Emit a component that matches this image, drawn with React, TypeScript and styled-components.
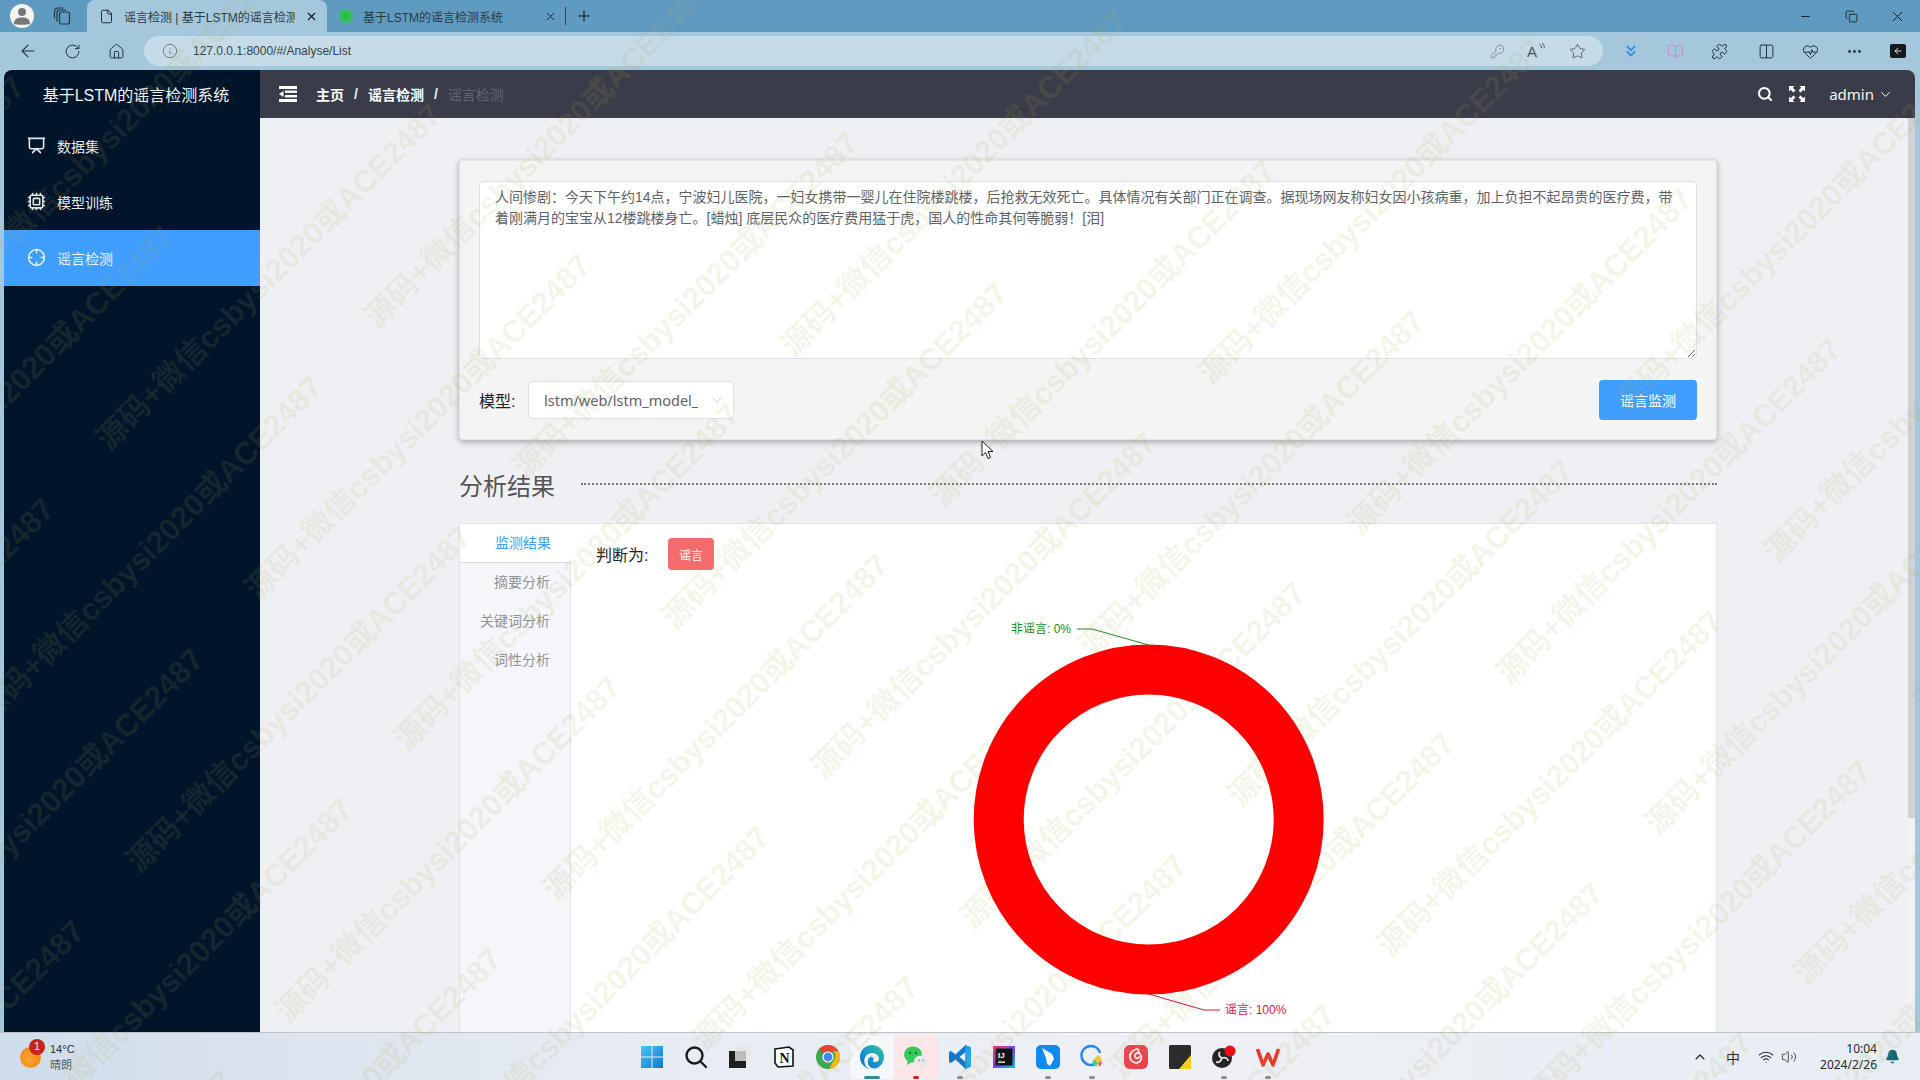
import React from "react";
import styled, { createGlobalStyle } from "styled-components";
import {
  ArrowLeft, RotateCw, Home, Info, KeyRound, Star, Puzzle, Columns2, HeartPulse, MoreHorizontal,
  Minus, Copy, X, Plus, File, Search, ChevronDown, ChevronUp, Presentation, Cpu, Crosshair, Wifi, Volume2, Bell, BookOpen, ChevronsDown,
} from "lucide-react";

const FONT = `"Liberation Sans", "Noto Sans CJK SC", sans-serif`;

const Global = createGlobalStyle`
  html, body { margin: 0; padding: 0; width: 1920px; height: 1080px; overflow: hidden; }
  * { box-sizing: border-box; }
  body { font-family: ${FONT}; }
`;

const Screen = styled.div`
  position: relative;
  width: 1920px;
  height: 1080px;
  overflow: hidden;
  display: flex;
  flex-direction: column;
  background: #a5c7dc;
`;

/* ---------- browser chrome ---------- */
const TabStrip = styled.div`
  height: 32px;
  flex: none;
  display: flex;
  align-items: center;
  background: #5f9bc0;
  color: #10181e;
`;
const IconCell = styled.div<{ $w?: number }>`
  width: ${(p) => p.$w ?? 44}px;
  flex: none;
  display: flex;
  align-items: center;
  justify-content: center;
`;
const Avatar = styled.div`
  width: 24px;
  height: 24px;
  border-radius: 50%;
  background: #f4f4f4;
  display: flex;
  align-items: center;
  justify-content: center;
`;
const Tab = styled.div<{ $active?: boolean; $w: number }>`
  width: ${(p) => p.$w}px;
  height: 32px;
  flex: none;
  display: flex;
  align-items: center;
  gap: 10px;
  padding: 0 8px 0 12px;
  border-radius: 8px 8px 0 0;
  background: ${(p) => (p.$active ? "#a5c7dc" : "transparent")};
  margin-left: ${(p) => (p.$active ? 7 : 0)}px;
`;
const TabTitle = styled.div`
  width: 171px;
  flex: none;
  font-size: 12px;
  color: #2a3a46;
  white-space: nowrap;
  overflow: hidden;
`;
const TabDot = styled.div`
  width: 14px;
  height: 14px;
  flex: none;
  border-radius: 50%;
  background: #2fb84f;
  border: 3px solid #35c25a;
`;
const TabDivider = styled.div`
  width: 1px;
  height: 18px;
  background: #2d4a5c;
`;
const WindowControls = styled.div`
  margin-left: auto;
  display: flex;
`;
const Toolbar = styled.div`
  height: 38px;
  flex: none;
  display: flex;
  align-items: center;
  padding-left: 6px;
  color: #22323d;
`;
const Address = styled.div`
  width: 1459px;
  height: 30px;
  margin: 0 6px;
  flex: none;
  border-radius: 15px;
  background: #c5dbe8;
  display: flex;
  align-items: center;
  padding: 0 6px 0 18px;
`;
const Url = styled.div`
  margin-left: 15px;
  font-size: 12px;
  color: #33424c;
  flex: 1;
`;
const ToolDivider = styled.div`
  width: 1px;
  height: 20px;
  margin: 0 2px 0 1px;
  background: #7d98a8;
`;
const SidePanelBtn = styled.div`
  width: 16px;
  height: 14px;
  background: #15191c;
  border-radius: 2px;
  display: flex;
  align-items: center;
  justify-content: center;
`;

/* ---------- app window ---------- */
const AppWindow = styled.div`
  flex: 1;
  min-height: 0;
  margin: 0 5px 0 4px;
  display: flex;
  overflow: hidden;
  border-radius: 8px 8px 0 0;
`;
const Sidebar = styled.aside`
  width: 256px;
  flex: none;
  background: #00142a;
  color: #fff;
`;
const Brand = styled.div`
  height: 48px;
  padding-left: 8px;
  display: flex;
  align-items: center;
  justify-content: center;
  font-size: 16px;
  color: #f2f4f6;
`;
const MenuItem = styled.div<{ $active?: boolean }>`
  height: 56px;
  display: flex;
  align-items: center;
  gap: 11px;
  padding-left: 23px;
  padding-bottom: 1px;
  font-size: 14px;
  color: ${(p) => (p.$active ? "#eaf4ff" : "#e6e9ec")};
  background: ${(p) => (p.$active ? "#409eff" : "transparent")};
`;
const Main = styled.div`
  flex: 1;
  min-width: 0;
  display: flex;
  flex-direction: column;
`;
const TopBar = styled.header`
  height: 48px;
  flex: none;
  background: #3a3d49;
  display: flex;
  align-items: center;
  padding-left: 19px;
  color: #fff;
`;
const Crumbs = styled.nav`
  display: flex;
  align-items: center;
  margin-left: 19px;
  gap: 10px;
  font-size: 14px;
`;
const Crumb = styled.span<{ $muted?: boolean }>`
  font-weight: ${(p) => (p.$muted ? 400 : 700)};
  color: ${(p) => (p.$muted ? "#60646f" : "#fff")};
`;
const CrumbSep = styled.span`
  font-weight: 700;
  color: #f0f0f0;
`;
const TopActions = styled.div`
  margin-left: auto;
  display: flex;
  align-items: center;
  padding-right: 19px;
`;
const UserName = styled.span`
  margin-left: 8px;
  font-size: 15px;
  font-family: "Noto Sans", sans-serif;
  color: #f4f4f4;
`;
const ContentRow = styled.div`
  flex: 1;
  min-height: 0;
  display: flex;
  background: #eff0f4;
`;
const Content = styled.main`
  flex: 1;
  min-width: 0;
  overflow: hidden;
  padding: 42px 191px 0 199px;
`;
const ScrollTrack = styled.div`
  width: 7px;
  flex: none;
  background: #f0f1f4;
`;
const ScrollThumb = styled.div`
  height: 700px;
  background: #cfd1d6;
`;
const InputCard = styled.section`
  height: 280px;
  padding: 20px 19px;
  background: #f4f4f5;
  border: 1px solid #e6e6e8;
  border-radius: 4px;
  box-shadow: 0 2px 6px rgba(0, 0, 0, 0.32);
`;
const NewsInput = styled.textarea`
  display: block;
  width: 100%;
  height: 178px;
  padding: 5px 15px;
  border: 1px solid #dcdfe6;
  border-radius: 4px;
  background: #fff;
  font-family: ${FONT};
  font-size: 14px;
  line-height: 21px;
  color: #606266;
  outline: none;
`;
const FormRow = styled.div`
  margin-top: 21px;
  height: 40px;
  display: flex;
  align-items: center;
`;
const FieldLabel = styled.label`
  font-size: 16px;
  color: #222;
  width: 49px;
  flex: none;
`;
const SelectBox = styled.div`
  width: 206px;
  height: 38px;
  background: #fff;
  border: 1px solid #dcdfe6;
  border-radius: 4px;
  display: flex;
  align-items: center;
  justify-content: space-between;
  padding: 0 8px 0 15px;
  color: #c0c4cc;
`;
const SelectValue = styled.div`
  width: 154px;
  flex: none;
  overflow: hidden;
  white-space: nowrap;
  font-size: 14.5px;
  font-family: "Noto Sans", sans-serif;
  color: #606266;
`;
const DetectButton = styled.button`
  margin-left: auto;
  width: 98px;
  height: 40px;
  border: none;
  border-radius: 4px;
  background: #409eff;
  color: #fff;
  font-family: ${FONT};
  font-size: 14px;
`;
const SectionHead = styled.div`
  height: 83px;
  padding-top: 5px;
  display: flex;
  align-items: center;
  gap: 26px;
  color: #555;
`;
const SectionTitle = styled.h2`
  margin: 0;
  font-size: 24px;
  font-weight: 400;
  flex: none;
`;
const DotLine = styled.div`
  flex: 1;
  border-top: 2px dotted #777;
`;
const ResultPanel = styled.section`
  min-height: 640px;
  display: flex;
  background: #fff;
  border: 1px solid #dfe2e8;
`;
const TabColumn = styled.div`
  width: 111px;
  flex: none;
  background: #f4f6fa;
  border-right: 1px solid #dfe4ed;
`;
const SideTab = styled.div<{ $active?: boolean }>`
  height: 39px;
  line-height: 39px;
  text-align: right;
  padding-right: 20px;
  font-size: 14px;
  color: ${(p) => (p.$active ? "#409eff" : "#909399")};
  background: ${(p) => (p.$active ? "#fff" : "transparent")};
  border-bottom: ${(p) => (p.$active ? "1px solid #d5dae4" : "0")};
  margin-right: ${(p) => (p.$active ? "-1px" : "0")};
  position: relative;
`;
const ResultBody = styled.div`
  flex: 1;
  min-width: 0;
  padding: 14px 0 0 25px;
`;
const Verdict = styled.div`
  display: flex;
  align-items: center;
  gap: 19px;
  font-size: 16px;
  color: #222;
`;
const VerdictLabel = styled.span`
  width: 53px;
  flex: none;
`;
const RumorTag = styled.span`
  width: 46px;
  height: 32px;
  border-radius: 4px;
  background: #f56c6c;
  color: #fff;
  font-size: 12px;
  display: flex;
  align-items: center;
  justify-content: center;
`;
const DonutChart = styled.svg`
  display: block;
  margin: 30px 0 0 -25px;
  position: relative;
  z-index: 6;
`;

/* ---------- taskbar ---------- */
const Taskbar = styled.footer`
  height: 48px;
  flex: none;
  display: flex;
  align-items: center;
  border-top: 1px solid #bfc3c8;
  background: linear-gradient(90deg, #cfdcea 0%, #e6ebf3 30%, #eef0f5 60%, #e8edf4 100%);
`;
const Weather = styled.div`
  width: 630px;
  flex: none;
  padding-left: 20px;
  display: flex;
  align-items: center;
  gap: 9px;
`;
const Sun = styled.div`
  position: relative;
  width: 21px;
  height: 21px;
  margin-top: 2px;
  border-radius: 50%;
  background: radial-gradient(circle at 40% 60%, #f9a52b, #ee7c12);
`;
const Badge = styled.span`
  position: absolute;
  left: 9px;
  top: -8px;
  width: 16px;
  height: 16px;
  border-radius: 50%;
  background: #c4261c;
  color: #fff;
  font-size: 10px;
  line-height: 16px;
  text-align: center;
`;
const WeatherText = styled.div`
  font-size: 11px;
  line-height: 16px;
  color: #2a3038;
`;
const WeatherSub = styled.div`
  color: #555c66;
`;
const Dock = styled.div`
  display: flex;
`;
const DockCell = styled.div<{ $bg?: string }>`
  position: relative;
  width: 44px;
  height: 44px;
  display: flex;
  align-items: center;
  justify-content: center;
  border-radius: 4px;
  background: ${(p) => p.$bg ?? "transparent"};
`;
const RunDot = styled.span<{ $color?: string; $wide?: boolean }>`
  position: absolute;
  bottom: 0;
  left: 50%;
  transform: translateX(-50%);
  width: ${(p) => (p.$wide ? 16 : 6)}px;
  height: 3px;
  border-radius: 2px;
  background: ${(p) => p.$color ?? "#8a8d92"};
`;
const Tray = styled.div`
  margin-left: auto;
  display: flex;
  align-items: center;
  color: #1e2328;
  padding-right: 20px;
`;
const ImeGlyph = styled.span`
  width: 32px;
  text-align: center;
  font-size: 14px;
  margin: 0 6px 0 7px;
`;
const Clock = styled.div`
  width: 76px;
  margin-right: 7px;
  text-align: right;
  font-size: 12px;
  line-height: 16px;
  color: #23282e;
  font-family: "Noto Sans", sans-serif;
`;

/* ---------- overlay ---------- */
const WatermarkLayer = styled.div`
  position: absolute;
  inset: 0;
  overflow: hidden;
  pointer-events: none;
  z-index: 5;
`;
const Stamp = styled.div`
  position: absolute;
  white-space: nowrap;
  font: 700 31px/1 ${FONT};
  color: rgba(170, 170, 78, 0.13);
  transform-origin: right center;
  transform: translate(-100%, -50%) rotate(-45deg);
`;
const Cursor = styled.svg`
  position: absolute;
  left: 981px;
  top: 440px;
  z-index: 7;
`;

const stamps: { x: number; y: number }[] = [];
for (let i = -12; i <= 12; i++) {
  for (let j = -8; j <= 8; j++) {
    const x = 198 + i * 149 + j * 417;
    const y = 654 + i * 150 + j * 28;
    if (x > -50 && x < 2500 && y > -50 && y < 1500) stamps.push({ x, y });
  }
}

const TEXT =
  "人间惨剧：今天下午约14点，宁波妇儿医院，一妇女携带一婴儿在住院楼跳楼，后抢救无效死亡。具体情况有关部门正在调查。据现场网友称妇女因小孩病重，加上负担不起昂贵的医疗费，带着刚满月的宝宝从12楼跳楼身亡。[蜡烛] 底层民众的医疗费用猛于虎，国人的性命其何等脆弱！[泪]";

const FoldIcon = () => (
  <svg width="18" height="16" viewBox="0 0 18 16" fill="#fff">
    <rect x="0" y="0" width="18" height="3" />
    <rect x="6" y="4.500" width="12" height="2.400" />
    <rect x="6" y="9" width="12" height="2.400" />
    <rect x="0" y="13" width="18" height="3" />
    <path d="M0 8l4.500-3v6z" />
  </svg>
);
const FullIcon = () => (
  <svg width="16" height="16" viewBox="0 0 16 16" fill="#fff">
    <path d="M0 0h5.500L3.800 1.700 6.500 4.400 4.400 6.500 1.700 3.800 0 5.500zM16 0v5.500l-1.700-1.700-2.700 2.700-2.100-2.100 2.700-2.700L10.500 0zM0 16v-5.500l1.700 1.700 2.700-2.700 2.100 2.100-2.700 2.700L5.500 16zM16 16h-5.500l1.700-1.700-2.700-2.700 2.100-2.100 2.700 2.700 1.700-1.700z" />
  </svg>
);
const PersonIcon = () => (
  <svg width="16" height="18" viewBox="0 0 16 18" fill="#777">
    <circle cx="8" cy="5" r="4" />
    <path d="M0 17c0-5 3-6.500 8-6.500s8 1.500 8 6.500c-2 1-14 1-16 0z" />
  </svg>
);
const CollectionsIcon = () => (
  <svg width="18" height="18" viewBox="0 0 18 18" fill="none" stroke="#26343e" strokeWidth="1.200">
    <rect x="6.500" y="5" width="10" height="12" rx="2" />
    <path d="M4 14.500V6c0-2 1-3 3-3h6M1.500 11.500V5c0-2.500 1.500-4 4-4h5" />
  </svg>
);
const ReadAloudIcon = () => (
  <svg width="20" height="18" viewBox="0 0 20 18" fill="none">
    <text x="0" y="15" fontFamily="Liberation Sans, sans-serif" fontSize="15" fill="#44525c">A</text>
    <path d="M12.500 2c1.500 1 2 2.500 1.800 4M15 1c1.800 1.300 2.500 3 2.200 5" stroke="#44525c" strokeWidth="1" />
  </svg>
);

const Win = () => (
  <svg width="24" height="24" viewBox="0 0 24 24">
    <defs>
      <linearGradient id="wg" x1="0" y1="0" x2="1" y2="1">
        <stop offset="0" stopColor="#4cc2f1" />
        <stop offset="1" stopColor="#0a78d4" />
      </linearGradient>
    </defs>
    <path fill="url(#wg)" d="M1 1h10.500v10.500H1zM12.500 1H23v10.500H12.500zM1 12.500h10.500V23H1zM12.500 12.500H23V23H12.500z" />
  </svg>
);
const SearchDock = () => (
  <svg width="24" height="24" viewBox="0 0 24 24" fill="none" stroke="#1b1b1b" strokeWidth="2.400" strokeLinecap="round">
    <circle cx="10.500" cy="10.500" r="8" />
    <path d="M16.500 16.500L22 22" />
  </svg>
);
const Stack = () => (
  <svg width="24" height="24" viewBox="0 0 24 24">
    <rect x="1" y="6" width="17" height="17" fill="#1f1f1f" />
    <rect x="8" y="1" width="15" height="15" rx="1" fill="#e8e8e8" />
    <rect x="7" y="6" width="11" height="10" fill="#bdbdbd" />
  </svg>
);
const Notion = () => (
  <svg width="22" height="22" viewBox="0 0 22 22">
    <path d="M2 3l14-2 4 3v16l-15 1-3-4z" fill="#fff" stroke="#111" strokeWidth="1.600" />
    <text x="11.500" y="17" textAnchor="middle" fontFamily="Liberation Serif, serif" fontWeight="700" fontSize="14" fill="#111">N</text>
  </svg>
);
const Chrome = () => (
  <svg width="24" height="24" viewBox="0 0 24 24">
    <circle cx="12" cy="12" r="12" fill="#34a853" />
    <path d="M12 0a12 12 0 0 1 10.400 6H12a6 6 0 0 0-5.200 3L3.200 4A12 12 0 0 1 12 0z" fill="#ea4335" />
    <path d="M22.400 6A12 12 0 0 1 13 24l5-9a6 6 0 0 0-1-9z" fill="#fbbc05" />
    <circle cx="12" cy="12" r="5.600" fill="#fff" />
    <circle cx="12" cy="12" r="4.400" fill="#4285f4" />
  </svg>
);
const Edge = () => (
  <svg width="26" height="26" viewBox="0 0 26 26">
    <defs>
      <linearGradient id="eg" x1="1" y1="0" x2="0" y2="1">
        <stop offset="0" stopColor="#35c98f" />
        <stop offset=".6" stopColor="#1590d8" />
        <stop offset="1" stopColor="#0c63b8" />
      </linearGradient>
    </defs>
    <circle cx="13" cy="13" r="12" fill="url(#eg)" />
    <path d="M9 24c-5-3-5-11 0-14 5-2.500 11 0 11 5 0 2-2 3-4 3-1 0-2-.5-2-1 2-3-1-5-3-4-3 2-3 7 0 10 2 1.500 5 2 8 1-3 2-7 2-10 0z" fill="#eef2f6" />
  </svg>
);
const WeChat = () => (
  <svg width="24" height="22" viewBox="0 0 24 22">
    <ellipse cx="9" cy="8.500" rx="9" ry="8" fill="#38c95c" />
    <path d="M4 14l-1 5 5-3z" fill="#38c95c" />
    <ellipse cx="17" cy="15" rx="7" ry="5.500" fill="#e8e8e8" />
    <circle cx="6" cy="7" r="1.200" fill="#1c7a36" />
    <circle cx="12" cy="7" r="1.200" fill="#1c7a36" />
    <circle cx="15" cy="14.500" r="0.900" fill="#999" />
    <circle cx="19" cy="14.500" r="0.900" fill="#999" />
  </svg>
);
const VSCode = () => (
  <svg width="24" height="24" viewBox="0 0 24 24">
    <path d="M17.500 0L23 2.500v19L17.500 24 7.500 14.500 3 18l-2-1V7l2-1 4.500 3.500zM17.500 7L11.500 12l6 5z" fill="#1479c8" />
    <path d="M17.500 0L23 2.500v19L17.500 24z" fill="#2aa2ea" />
  </svg>
);
const Idea = () => (
  <svg width="22" height="22" viewBox="0 0 22 22">
    <defs>
      <linearGradient id="ig" x1="0" y1="0" x2="1" y2="1">
        <stop offset="0" stopColor="#fe315d" />
        <stop offset=".5" stopColor="#7b3ff2" />
        <stop offset="1" stopColor="#07c3f2" />
      </linearGradient>
    </defs>
    <rect width="22" height="22" fill="url(#ig)" />
    <rect x="2.500" y="2.500" width="17" height="17" fill="#111" />
    <text x="5" y="12" fontFamily="Liberation Sans, sans-serif" fontWeight="700" fontSize="8" fill="#fff">IJ</text>
    <rect x="5" y="15.500" width="7" height="1.300" fill="#fff" />
  </svg>
);
const Feather = () => (
  <svg width="24" height="24" viewBox="0 0 24 24">
    <rect width="24" height="24" rx="5" fill="#0f8af0" />
    <path d="M6 3l10 6 2 5-4 7-3-2-1-6z" fill="#fff" />
  </svg>
);
const Bubble = () => (
  <svg width="26" height="26" viewBox="0 0 26 26" fill="none">
    <path d="M12 2a9.500 9.500 0 1 0 3 18.500" stroke="#2a86f0" strokeWidth="2.400" />
    <path d="M12 2a9.500 9.500 0 0 1 9 7" stroke="#2a86f0" strokeWidth="2.400" />
    <path d="M19 11l4 4-4 4-4-4z" fill="#f4c430" />
    <path d="M15 15l4 4-2 4-4-4z" fill="#3ecf8e" />
    <path d="M19 19l3-3 1 4-3 3z" fill="#ef6a4c" />
  </svg>
);
const Netease = () => (
  <svg width="24" height="24" viewBox="0 0 24 24" fill="none">
    <rect width="24" height="24" rx="6" fill="#ee3f4d" />
    <path d="M13 4c-5 1-8 5-7 9s6 6 9 4 3-6 1-8-5-1-5 2 3 3 4 1M14 4l1 4" stroke="#fff" strokeWidth="1.700" strokeLinecap="round" />
  </svg>
);
const Sticky = () => (
  <svg width="22" height="24" viewBox="0 0 22 24">
    <rect width="22" height="24" rx="1.500" fill="#2b2b2b" />
    <path d="M22 10v14H10z" fill="#f6cf1e" />
  </svg>
);
const Obs = () => (
  <svg width="26" height="26" viewBox="0 0 26 26" fill="none">
    <circle cx="11" cy="14" r="10" fill="#23262b" />
    <path d="M11 14c-3-1-4-4-2-6m2 6c3-1 6 0 6 3m-6-3c-1 3-3 5-6 4" stroke="#e6e6e6" strokeWidth="1.800" />
    <circle cx="19" cy="7" r="5.500" fill="#ee0a12" />
  </svg>
);
const Wps = () => (
  <svg width="24" height="22" viewBox="0 0 24 22" fill="none">
    <path d="M1.500 3l5.500 16 5-11 5 11 5.500-16" stroke="#e8392c" strokeWidth="3.600" strokeLinejoin="round" />
  </svg>
);

export default function App() {
  return (
    <Screen>
      <Global />
      <TabStrip>
        <IconCell $w={44}>
          <Avatar>
            <PersonIcon />
          </Avatar>
        </IconCell>
        <IconCell $w={36}>
          <CollectionsIcon />
        </IconCell>
        <Tab $active $w={240}>
          <File size={15} strokeWidth={1.4} />
          <TabTitle>谣言检测 | 基于LSTM的谣言检测系统</TabTitle>
          <X size={13} strokeWidth={2} />
        </Tab>
        <Tab $w={238}>
          <TabDot />
          <TabTitle>基于LSTM的谣言检测系统</TabTitle>
          <X size={13} strokeWidth={1.6} />
        </Tab>
        <TabDivider />
        <IconCell $w={36}>
          <Plus size={18} strokeWidth={1.4} />
        </IconCell>
        <WindowControls>
          <IconCell $w={46}>
            <Minus size={13} strokeWidth={1.6} />
          </IconCell>
          <IconCell $w={46}>
            <Copy size={13} strokeWidth={1.5} />
          </IconCell>
          <IconCell $w={46}>
            <X size={17} strokeWidth={1.4} />
          </IconCell>
        </WindowControls>
      </TabStrip>
      <Toolbar>
        <IconCell>
          <ArrowLeft size={20} strokeWidth={1.3} />
        </IconCell>
        <IconCell>
          <RotateCw size={17} strokeWidth={1.4} />
        </IconCell>
        <IconCell>
          <Home size={17} strokeWidth={1.4} />
        </IconCell>
        <Address>
          <Info size={16} strokeWidth={1.2} color="#55636d" />
          <Url>127.0.0.1:8000/#/Analyse/List</Url>
          <IconCell $w={40}>
            <KeyRound size={15} strokeWidth={1.2} color="#6b7a84" />
          </IconCell>
          <IconCell $w={40}>
            <ReadAloudIcon />
          </IconCell>
          <IconCell $w={40}>
            <Star size={17} strokeWidth={1.2} color="#44525c" />
          </IconCell>
        </Address>
        <IconCell>
          <ChevronsDown size={18} strokeWidth={2.4} color="#3a8fe8" />
        </IconCell>
        <IconCell>
          <BookOpen size={17} strokeWidth={1.4} color="#c28fd6" />
        </IconCell>
        <IconCell>
          <Puzzle size={17} strokeWidth={1.4} />
        </IconCell>
        <ToolDivider />
        <IconCell>
          <Columns2 size={17} strokeWidth={1.4} />
        </IconCell>
        <IconCell>
          <HeartPulse size={17} strokeWidth={1.4} />
        </IconCell>
        <IconCell>
          <MoreHorizontal size={17} strokeWidth={2} />
        </IconCell>
        <IconCell>
          <SidePanelBtn>
            <ArrowLeft size={10} strokeWidth={2} color="#fff" />
          </SidePanelBtn>
        </IconCell>
      </Toolbar>

      <AppWindow>
        <Sidebar>
          <Brand>基于LSTM的谣言检测系统</Brand>
          <MenuItem>
            <Presentation size={19} strokeWidth={2} />
            数据集
          </MenuItem>
          <MenuItem>
            <Cpu size={19} strokeWidth={2} />
            模型训练
          </MenuItem>
          <MenuItem $active>
            <Crosshair size={19} strokeWidth={1.8} />
            谣言检测
          </MenuItem>
        </Sidebar>
        <Main>
          <TopBar>
            <FoldIcon />
            <Crumbs>
              <Crumb>主页</Crumb>
              <CrumbSep>/</CrumbSep>
              <Crumb>谣言检测</Crumb>
              <CrumbSep>/</CrumbSep>
              <Crumb $muted>谣言检测</Crumb>
            </Crumbs>
            <TopActions>
              <IconCell $w={16}>
                <Search size={18} strokeWidth={3} />
              </IconCell>
              <IconCell $w={48}>
                <FullIcon />
              </IconCell>
              <UserName>admin</UserName>
              <IconCell $w={22}>
                <ChevronDown size={15} strokeWidth={1.6} />
              </IconCell>
            </TopActions>
          </TopBar>
          <ContentRow>
            <Content>
              <InputCard>
                <NewsInput readOnly defaultValue={TEXT} />
                <FormRow>
                  <FieldLabel>模型:</FieldLabel>
                  <SelectBox>
                    <SelectValue>lstm/web/lstm_model_1</SelectValue>
                    <ChevronDown size={16} strokeWidth={1.2} />
                  </SelectBox>
                  <DetectButton>谣言监测</DetectButton>
                </FormRow>
              </InputCard>
              <SectionHead>
                <SectionTitle>分析结果</SectionTitle>
                <DotLine />
              </SectionHead>
              <ResultPanel>
                <TabColumn>
                  <SideTab $active>监测结果</SideTab>
                  <SideTab>摘要分析</SideTab>
                  <SideTab>关键词分析</SideTab>
                  <SideTab>词性分析</SideTab>
                </TabColumn>
                <ResultBody>
                  <Verdict>
                    <VerdictLabel>判断为:</VerdictLabel>
                    <RumorTag>谣言</RumorTag>
                  </Verdict>
                  <DonutChart width="1146" height="470" viewBox="0 0 1146 470">
                    <circle cx="577.700" cy="219.500" r="150" fill="none" stroke="#ff0000" strokeWidth="50" />
                    <polyline points="506,29 521,29 577.700,45" fill="none" stroke="#228b22" strokeWidth="1" />
                    <text x="440" y="33" fontSize="12" fontFamily={FONT} fill="#228b22">非谣言: 0%</text>
                    <polyline points="577.700,394 633,410 649,410" fill="none" stroke="#dc143c" strokeWidth="1" />
                    <text x="654" y="414" fontSize="12" fontFamily={FONT} fill="#dc143c">谣言: 100%</text>
                  </DonutChart>
                </ResultBody>
              </ResultPanel>
            </Content>
            <ScrollTrack>
              <ScrollThumb />
            </ScrollTrack>
          </ContentRow>
        </Main>
      </AppWindow>

      <Taskbar>
        <Weather>
          <Sun>
            <Badge>1</Badge>
          </Sun>
          <WeatherText>
            14°C
            <WeatherSub>晴朗</WeatherSub>
          </WeatherText>
        </Weather>
        <Dock>
          <DockCell><Win /></DockCell>
          <DockCell><SearchDock /></DockCell>
          <DockCell><Stack /></DockCell>
          <DockCell><Notion /></DockCell>
          <DockCell><Chrome /></DockCell>
          <DockCell $bg="#f5f7fa"><Edge /><RunDot $color="#3a8a9c" $wide /></DockCell>
          <DockCell $bg="#fbe6e8"><WeChat /><RunDot $color="#c4261c" /></DockCell>
          <DockCell><VSCode /><RunDot /></DockCell>
          <DockCell><Idea /></DockCell>
          <DockCell><Feather /><RunDot /></DockCell>
          <DockCell><Bubble /><RunDot /></DockCell>
          <DockCell><Netease /></DockCell>
          <DockCell><Sticky /></DockCell>
          <DockCell><Obs /><RunDot /></DockCell>
          <DockCell><Wps /><RunDot /></DockCell>
        </Dock>
        <Tray>
          <IconCell $w={20}>
            <ChevronUp size={16} strokeWidth={1.6} />
          </IconCell>
          <ImeGlyph>中</ImeGlyph>
          <IconCell $w={22}>
            <Wifi size={16} strokeWidth={1.6} />
          </IconCell>
          <IconCell $w={24}>
            <Volume2 size={16} strokeWidth={1.2} />
          </IconCell>
          <Clock>
            10:04
            <br />
            2024/2/26
          </Clock>
          <IconCell $w={16}>
            <Bell size={15} fill="#176a72" color="#176a72" />
          </IconCell>
        </Tray>
      </Taskbar>

      <WatermarkLayer>
        {stamps.map((s, i) => (
          <Stamp key={i} style={{ left: s.x, top: s.y }}>
            源码+微信csbysi2020或ACE2487
          </Stamp>
        ))}
      </WatermarkLayer>
      <Cursor width="13" height="20" viewBox="0 0 13 20">
        <path d="M1 1v15l3.500-3.500 2.500 6 2.500-1-2.500-6H12z" fill="#fff" stroke="#222" strokeWidth="1" />
      </Cursor>
    </Screen>
  );
}
